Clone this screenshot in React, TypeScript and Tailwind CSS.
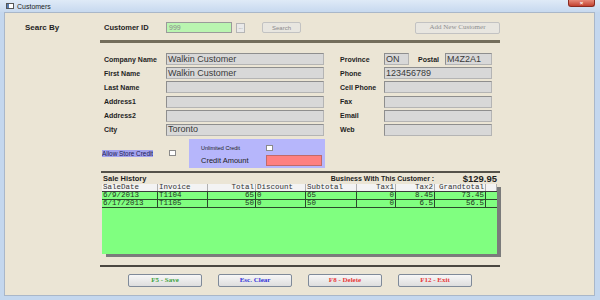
import React from "react";

const lbl = "font-bold text-[7px] leading-none text-[#1e1e1e] whitespace-nowrap";

function Field({ w, value }: { w: string; value?: string }) {
  return (
    <div
      className={`${w} h-[12px] bg-[#d8d8d8] border border-t-[#8e8e8e] border-l-[#8e8e8e] border-r-[#b4b4b4] border-b-[#b4b4b4] flex items-center pl-[1px] text-[9px] leading-none text-[#3a3a3a] whitespace-nowrap overflow-hidden`}
    >
      {value}
    </div>
  );
}

function Check() {
  return <div className="w-[7px] h-[6px] bg-white border border-[#8a8a8a]" />;
}

const cols: { w: string; name: string; right: boolean }[] = [
  { w: "w-[56px]", name: "SaleDate", right: false },
  { w: "w-[50px]", name: "Invoice", right: false },
  { w: "w-[48px]", name: "Total", right: true },
  { w: "w-[50px]", name: "Discount", right: false },
  { w: "w-[51px]", name: "Subtotal", right: false },
  { w: "w-[39px]", name: "Tax1", right: true },
  { w: "w-[39px]", name: "Tax2", right: true },
  { w: "w-[51px]", name: "Grandtotal", right: true },
  { w: "w-[11px]", name: "", right: false },
];

const rows = [
  ["6/9/2013", "T1104", "65", "0", "65", "0", "8.45", "73.45", ""],
  ["6/17/2013", "T1105", "50", "0", "50", "0", "6.5", "56.5", ""],
];

function Btn({ text, color }: { text: string; color: string }) {
  return (
    <div
      className={`w-[74px] h-[13px] rounded-[2px] border border-[#7f8a99] bg-gradient-to-b from-[#f7f7f7] to-[#dedede] flex items-center justify-center font-['Liberation_Serif',serif] font-bold text-[7px] leading-none ${color}`}
    >
      {text}
    </div>
  );
}

export default function App() {
  return (
    <div className="w-[600px] h-[300px] overflow-hidden flex flex-col bg-[#c4d7ee] font-['Liberation_Sans',Arial,sans-serif] text-[#1e1e1e]">
      {/* title bar */}
      <div className="h-[12px] shrink-0 flex items-center bg-gradient-to-b from-[#dfeaf7] to-[#c7d9ef]">
        <div className="ml-[6px] w-[8px] h-[6px] border border-[#555] bg-white flex">
          <div className="w-[2px] bg-[#5a7db0]" />
        </div>
        <span className="ml-[3px] text-[7px] leading-none text-[#222]">Customers</span>
        <div className="ml-auto mr-[5px] self-start w-[27px] h-[7px] rounded-b-[3px] bg-gradient-to-b from-[#e6897a] to-[#c2402e] border border-[#8a2a20] border-t-0 flex items-center justify-center text-white text-[6px] leading-none font-bold">
          ×
        </div>
      </div>

      {/* window body */}
      <div className="flex-1 ml-[4px] mr-[5px] mb-[4px] bg-[#ebe5d5] border border-[#a9b7c9] flex flex-col">
        {/* search row */}
        <div className="mt-[9px] h-[11px] flex items-center">
          <div className="ml-[20px] w-[79px] font-bold text-[8px] leading-none">Searc By</div>
          <div className="w-[62px] font-bold text-[7.5px] leading-none">Customer ID</div>
          <div className="w-[66px] h-[11px] bg-[#b9f5b0] border border-[#9a9a9a] flex items-center pl-[2px] text-[7px] leading-none text-[#8a8a8a]">
            999
          </div>
          <div className="ml-[4px] w-[9px] h-[10px] border border-[#b5b5b5] bg-[#e9e9e9] flex items-center justify-center overflow-hidden text-[5px] leading-none text-[#777]">
            ...
          </div>
          <div className="ml-[17px] w-[39px] h-[11px] rounded-[2px] border border-[#c2c2c2] bg-[#e8e6e0] flex items-center justify-center text-[6px] leading-none text-[#8a8a8a]">
            Search
          </div>
          <div className="ml-[114px] w-[85px] h-[12px] rounded-[2px] border border-[#c2c2c2] bg-[#e8e6e0] flex items-center justify-center font-['Liberation_Serif',serif] text-[7px] leading-none text-[#8e8e8e]">
            Add New Customer
          </div>
        </div>

        {/* thick separator */}
        <div className="mt-[7px] ml-[95px] w-[400px] h-[3px] bg-[#736d5b]" />

        {/* form */}
        <div className="mt-[10px] flex">
          <div className="ml-[99px] flex flex-col gap-[2.2px]">
            {[
              ["Company Name", "Walkin Customer"],
              ["First Name", "Walkin Customer"],
              ["Last Name", ""],
              ["Address1", ""],
              ["Address2", ""],
              ["City", "Toronto"],
            ].map(([l, v]) => (
              <div key={l} className="flex items-center h-[12px]">
                <div className={`w-[62px] ${lbl}`}>{l}</div>
                <Field w="w-[158px]" value={v} />
              </div>
            ))}
          </div>
          <div className="ml-[16px] flex flex-col gap-[2.2px]">
            <div className="flex items-center h-[12px]">
              <div className={`w-[44px] ${lbl}`}>Province</div>
              <Field w="w-[25px]" value="ON" />
              <div className={`ml-[9px] w-[27px] ${lbl}`}>Postal</div>
              <Field w="w-[47px]" value="M4Z2A1" />
            </div>
            {[
              ["Phone", "123456789"],
              ["Cell Phone", ""],
              ["Fax", ""],
              ["Email", ""],
              ["Web", ""],
            ].map(([l, v]) => (
              <div key={l} className="flex items-center h-[12px]">
                <div className={`w-[44px] ${lbl}`}>{l}</div>
                <Field w="w-[108px]" value={v} />
              </div>
            ))}
          </div>
        </div>

        {/* credit area */}
        <div className="mt-[3px] flex items-center">
          <div className="ml-[97px] w-[51px] h-[7px] bg-[#a2a2ee] overflow-hidden whitespace-nowrap text-[6.4px] leading-[7px] text-[#1a1a50]">
            Allow Store Credit
          </div>
          <div className="ml-[16px]">
            <Check />
          </div>
          <div className="ml-[13px] w-[136px] h-[29px] bg-[#b6b6fb] flex flex-col pl-[12px] pt-[6px]">
            <div className="h-[7px] flex items-center">
              <div className="w-[65px] text-[5.5px] leading-none text-[#222]">Unlimited Credit</div>
              <Check />
            </div>
            <div className="mt-[3px] h-[11px] flex items-center">
              <div className="w-[65px] text-[7.5px] leading-none text-[#222]">Credit Amount</div>
              <div className="w-[56px] h-[11px] bg-[#ff8080] border border-[#c06a6a]" />
            </div>
          </div>
        </div>

        {/* separator */}
        <div className="mt-[3px] ml-[96px] w-[399px] h-[2px] bg-[#55524a]" />

        {/* sale history header */}
        <div className="mt-[2px] ml-[98px] w-[394px] h-[8px] flex items-center whitespace-nowrap">
          <div className="w-[228px] font-bold text-[7.5px] leading-none">Sale History</div>
          <div className="w-[132px] font-bold text-[7px] leading-none">Business With This Customer :</div>
          <div className="flex-1 text-right font-bold text-[9.5px] leading-none">$129.95</div>
        </div>

        {/* grid */}
        <div className="mt-[1px] ml-[97px] w-[395px] h-[70px] bg-[#80ff80] shadow-[4px_3px_0_#7b7b7b] flex flex-col font-['Liberation_Mono',monospace] text-[7.5px] leading-none">
          <div className="h-[8px] flex bg-[#f3f3f3] border-b border-[#3a3a3a]">
            {cols.map((c, i) => (
              <div
                key={i}
                className={`${c.w} h-full border-r border-[#b0b0b0] px-[1px] flex items-center text-[#333] ${c.right ? "justify-end" : ""}`}
              >
                {c.name}
              </div>
            ))}
          </div>
          {rows.map((r, ri) => (
            <div key={ri} className="h-[8px] flex border-b border-[#2c4a2c]">
              {r.map((v, ci) => (
                <div
                  key={ci}
                  className={`${cols[ci].w} h-full ${ci < 8 ? "border-r border-[#2c4a2c]" : ""} px-[1px] flex items-center text-[#1f2f1f] ${cols[ci].right ? "justify-end" : ""}`}
                >
                  {v}
                </div>
              ))}
            </div>
          ))}
        </div>

        {/* bottom separator */}
        <div className="mt-[11px] ml-[95px] w-[400px] h-[2px] bg-[#4a4740]" />

        {/* buttons */}
        <div className="mt-[7px] ml-[123px] flex gap-[16px]">
          <Btn text="F5 - Save" color="text-[#3fa33f]" />
          <Btn text="Esc. Clear" color="text-[#3535d8]" />
          <Btn text="F8 - Delete" color="text-[#e83a3a]" />
          <Btn text="F12 - Exit" color="text-[#e83a3a]" />
        </div>
      </div>
    </div>
  );
}
